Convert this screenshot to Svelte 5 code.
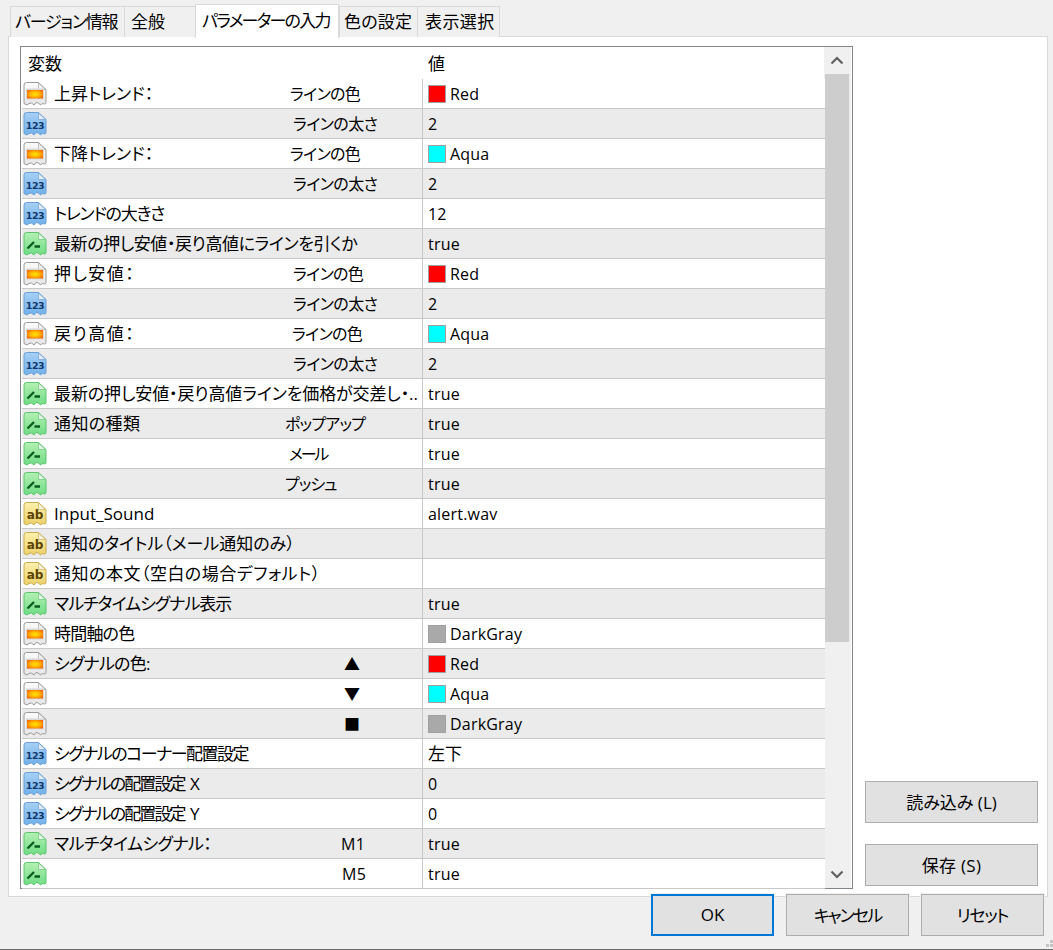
<script>
  const tabs = [
    { label: 'バージョン情報', w: 114, pad: 4, ls: -1.2 },
    { label: '全般', w: 71, pad: 6, ls: 0 },
    { label: 'パラメーターの入力', w: 144, pad: 6, ls: -1.8, active: true },
    { label: '色の設定', w: 78, pad: 4, ls: .2 },
    { label: '表示選択', w: 83, pad: 7, ls: .4 }
  ];
  const colors = { Red: '#ff0000', Aqua: '#00ffff', DarkGray: '#a9a9a9' };
  const isLatin = (s) => /^[A-Za-z0-9_]+$/.test(s);
  // kind, name, sub, sub offset, value, name tracking, sub tracking
  const rows = [
    ['c', '上昇トレンド：', 'ラインの色', 269, 'Red', 0, -.7],
    ['n', '', 'ラインの太さ', 272, '2', 0, -.6],
    ['c', '下降トレンド：', 'ラインの色', 269, 'Aqua', 0, -.7],
    ['n', '', 'ラインの太さ', 272, '2', 0, -.6],
    ['n', 'トレンドの大きさ', '', 0, '12', -1.25, 0],
    ['b', '最新の押し安値・戻り高値にラインを引くか', '', 0, 'true', -.4, 0],
    ['c', '押し安値：', 'ラインの色', 272, 'Red', 1.5, -.7],
    ['n', '', 'ラインの太さ', 272, '2', 0, -.6],
    ['c', '戻り高値：', 'ラインの色', 271, 'Aqua', 1.5, -.7],
    ['n', '', 'ラインの太さ', 272, '2', 0, -.6],
    ['b', '最新の押し安値・戻り高値ラインを価格が交差し・..', '', 0, 'true', -.1, 0],
    ['b', '通知の種類', 'ポップアップ', 264, 'true', .4, -.8],
    ['b', '', 'メール', 268, 'true', 0, -2.2],
    ['b', '', 'プッシュ', 264, 'true', 0, -1],
    ['s', 'Input_Sound', '', 0, 'alert.wav', 0, 0],
    ['s', '通知のタイトル（メール通知のみ）', '', 0, '', 0, 0],
    ['s', '通知の本文（空白の場合デフォルト）', '', 0, '', .5, 0],
    ['b', 'マルチタイムシグナル表示', '', 0, 'true', -1, 0],
    ['c', '時間軸の色', '', 0, 'DarkGray', -.8, 0],
    ['c', 'シグナルの色:', '▲', 323, 'Red', -.8, 0],
    ['c', '', '▼', 323, 'Aqua', 0, 0],
    ['c', '', '■', 323, 'DarkGray', 0, 0],
    ['n', 'シグナルのコーナー配置設定', '', 0, '左下', -1.5, 0],
    ['n', 'シグナルの配置設定 X', '', 0, '0', -1.9, 0],
    ['n', 'シグナルの配置設定 Y', '', 0, '0', -1.9, 0],
    ['b', 'マルチタイムシグナル：', 'M1', 320, 'true', -.6, .3],
    ['b', '', 'M5', 321, 'true', 0, .3]
  ];
  const docPath = 'M3.5 .5H15.5L23 7.5V20.5Q23 22 21.5 22L19.5 21.5 17.5 23 15.5 21 13 20.5 11 23 8.5 21 6 21.5 4 23 1 21.5V3Q1 .5 3.5 .5Z';
  const palette = {
    c: { fill: 'url(#gc)', line: '#9a9a9a' },
    n: { fill: 'url(#gn)', line: '#6b9fd6' },
    b: { fill: 'url(#gb)', line: '#5cc46e' },
    s: { fill: 'url(#gs)', line: '#c9ad4e' }
  };
</script>

{#snippet icon(kind)}
  <svg class="icon" viewBox="0 0 24 24" width="24" height="24" aria-hidden="true">
    <path d={docPath} fill={palette[kind].fill} stroke={palette[kind].line} />
    <path d="M15.5 1V7.5H22.5Z" fill="#f4f4f4" stroke={palette[kind].line} stroke-width=".7" opacity=".85" />
    {#if kind === 'c'}
      <rect x="3" y="6.5" width="18" height="11" fill="#d8d8d8" />
      <rect x="4" y="8" width="16" height="8.5" fill="url(#gfire)" />
    {:else if kind === 'n'}
      <text class="glyph num" x="12" y="17" text-anchor="middle">123</text>
    {:else if kind === 'b'}
      <path d="M4.5 16.5L11 10M11.5 14.5H17" stroke="#0b5d1e" stroke-width="2.4" fill="none" />
    {:else}
      <text class="glyph ab" x="12" y="17" text-anchor="middle">ab</text>
    {/if}
  </svg>
{/snippet}

<div class="window">
  <svg class="defs" width="0" height="0" aria-hidden="true">
    <defs>
      <linearGradient id="gc" x1="0" y1="0" x2="0" y2="1"><stop offset="0" stop-color="#fbfbfb" /><stop offset="1" stop-color="#e6e6e6" /></linearGradient>
      <linearGradient id="gn" x1="0" y1="0" x2="0" y2="1"><stop offset="0" stop-color="#a7d0f5" /><stop offset="1" stop-color="#6fb0ea" /></linearGradient>
      <linearGradient id="gb" x1="0" y1="0" x2="0" y2="1"><stop offset="0" stop-color="#b4f0b4" /><stop offset="1" stop-color="#6fdc84" /></linearGradient>
      <linearGradient id="gs" x1="0" y1="0" x2="0" y2="1"><stop offset="0" stop-color="#fdf0ae" /><stop offset="1" stop-color="#ecd06a" /></linearGradient>
      <radialGradient id="gfire" cx=".5" cy=".5" r=".6"><stop offset="0" stop-color="#ffe600" /><stop offset=".55" stop-color="#ffb000" /><stop offset="1" stop-color="#f76a00" /></radialGradient>
    </defs>
  </svg>

  <div class="tabs">
    {#each tabs as t}
      <div class="tab" class:active={t.active} style:width="{t.w}px" style:padding-left="{t.pad}px" style:letter-spacing="{t.ls}px">{t.label}</div>
    {/each}
  </div>

  <div class="panel">
    <div class="list">
      <div class="content">
        <div class="head">
          <div class="hname">変数</div>
          <div class="hval">値</div>
        </div>
        {#each rows as r, i}
          <div class="row" class:alt={i % 2 === 1}>
            <div class="cell-name">
              {@render icon(r[0])}
              <span class="name" class:latin={isLatin(r[1])} style:letter-spacing="{r[5]}px">{r[1]}</span>
              {#if r[2]}<span class="sub" class:latin={isLatin(r[2])} style:padding-left="{r[3]}px" style:letter-spacing="{r[6]}px">{r[2]}</span>{/if}
            </div>
            <div class="cell-val" class:kanji={r[4] === '左下'}>
              {#if colors[r[4]]}<span class="swatch" style:background={colors[r[4]]}></span>{/if}
              <span>{r[4]}</span>
            </div>
          </div>
        {/each}
      </div>
      <div class="scroll">
        <div class="arrow">
          <svg width="14" height="9" viewBox="0 0 14 9"><path d="M1.5 7.5L7 2L12.5 7.5" fill="none" stroke="#606060" stroke-width="2.2" /></svg>
        </div>
        <div class="thumb"></div>
        <div class="track"></div>
        <div class="arrow">
          <svg width="14" height="9" viewBox="0 0 14 9"><path d="M1.5 1.5L7 7L12.5 1.5" fill="none" stroke="#606060" stroke-width="2.2" /></svg>
        </div>
      </div>
    </div>
    <div class="side">
      <button class="btn side-btn">読み込み (L)</button>
      <button class="btn side-btn save">保存 (S)</button>
    </div>
  </div>

  <div class="footer">
    <button class="btn foot-btn primary">OK</button>
    <button class="btn foot-btn cancel">キャンセル</button>
    <button class="btn foot-btn reset">リセット</button>
  </div>
  <div class="grip"></div>
  <div class="edge"></div>
</div>

<style>
  :global(body) {
    margin: 0;
    background: #f0f0f0;
  }
  .window {
    position: relative;
    width: 1053px;
    height: 950px;
    overflow: hidden;
    background: #f0f0f0;
    color: #000;
    font-family: "Open Sans", "Noto Sans CJK JP", sans-serif;
    font-size: 17px;
    font-feature-settings: "palt";
    display: flex;
    flex-direction: column;
  }
  .defs {
    position: absolute;
  }
  .tabs {
    display: flex;
    align-items: flex-end;
    height: 37px;
    padding-left: 10px;
    position: relative;
    z-index: 1;
  }
  .tab {
    box-sizing: border-box;
    height: 31px;
    border: 1px solid #d9d9d9;
    border-bottom: 0;
    border-right-width: 0;
    background: #f0f0f0;
    display: flex;
    align-items: center;
    white-space: nowrap;
    line-height: 1;
    padding-bottom: 1px;
  }
  .tab:last-child {
    border-right-width: 1px;
  }
  .tab.active {
    height: 34px;
    background: #fff;
    border-right-width: 1px;
    margin-bottom: -1px;
    padding-bottom: 3px;
  }
  .panel {
    box-sizing: border-box;
    margin: -1px 5px 0 8px;
    height: 861px;
    background: #fff;
    border: 1px solid #d9d9d9;
    display: flex;
    padding: 9px 0 7px 11px;
  }
  .list {
    box-sizing: border-box;
    width: 833px;
    height: 843px;
    border: 1px solid #82878c;
    display: flex;
    background: #fff;
  }
  .content {
    width: 804px;
  }
  .head {
    height: 32px;
    display: flex;
    align-items: center;
    border-right: 1px solid #f0f0f0;
    padding-bottom: 2px;
    box-sizing: border-box;
  }
  .hname {
    width: 401px;
    padding-left: 7px;
    box-sizing: border-box;
  }
  .hval {
    padding-left: 6px;
  }
  .row {
    box-sizing: border-box;
    height: 30px;
    display: flex;
    border-bottom: 1px solid #c8c8c8;
    margin-left: 1px;
  }
  .row.alt {
    background: #ebebeb;
  }
  .cell-name {
    box-sizing: border-box;
    width: 401px;
    border-right: 1px solid #c8c8c8;
    display: grid;
    grid-template-columns: 31px 1fr;
    align-items: center;
    padding-left: 1px;
    white-space: nowrap;
    position: relative;
  }
  .icon {
    grid-column: 1;
    grid-row: 1;
  }
  .glyph {
    font-family: "DejaVu Sans", sans-serif;
    font-weight: 700;
    fill: #12386b;
    font-feature-settings: normal;
  }
  .num {
    font-size: 9.5px;
    letter-spacing: -.5px;
  }
  .ab {
    font-size: 12px;
    fill: #5a4300;
  }
  .name {
    grid-column: 2;
    grid-row: 1;
    padding-bottom: 2px;
    word-spacing: 3px;
  }
  .name.latin {
    padding-bottom: 0;
  }
  .sub {
    grid-column: 2;
    grid-row: 1;
    margin-left: -33px;
    font-size: 16px;
    padding-bottom: 1px;
  }
  .sub.latin {
    padding-bottom: 0;
    padding-top: 1px;
  }
  .cell-val {
    flex: 1;
    display: flex;
    align-items: center;
    gap: 4px;
    padding-left: 5px;
    white-space: nowrap;
    font-size: 16px;
    letter-spacing: .2px;
  }
  .cell-val.kanji {
    font-size: 17px;
    letter-spacing: 0;
    padding-bottom: 2px;
  }
  .swatch {
    box-sizing: border-box;
    width: 18px;
    height: 18px;
    border: 1px solid #a0a0a0;
  }
  .scroll {
    width: 26px;
    background: #f0f0f0;
    display: flex;
    flex-direction: column;
  }
  .arrow {
    height: 27px;
    flex: none;
    display: flex;
    align-items: center;
    justify-content: center;
    padding-right: 2px;
  }
  .thumb {
    height: 568px;
    width: 24px;
    background: #cdcdcd;
  }
  .track {
    flex: 1;
  }
  .side {
    flex: 1;
    display: flex;
    flex-direction: column;
    align-items: flex-start;
    justify-content: flex-end;
    gap: 21px;
    padding: 0 0 3px 12px;
  }
  .btn {
    box-sizing: border-box;
    height: 42px;
    border: 1px solid #adadad;
    background: #e1e1e1;
    font: inherit;
    color: #000;
    padding: 0 0 2px;
  }
  .side-btn {
    width: 173px;
  }
  .save {
    letter-spacing: .3px;
  }
  .footer {
    display: flex;
    gap: 12px;
    margin-top: -3px;
    padding-left: 651px;
    position: relative;
  }
  .foot-btn {
    width: 123px;
    box-shadow: 0 0 0 1px #f0f0f0;
  }
  .primary {
    border: 2px solid #0078d7;
  }
  .cancel {
    letter-spacing: -1.9px;
  }
  .reset {
    letter-spacing: -1.3px;
  }
  .grip {
    position: absolute;
    right: 0;
    bottom: 3px;
    width: 7px;
    height: 7px;
    background:
      linear-gradient(#c4c4c4, #c4c4c4) 0 4px / 3px 3px no-repeat,
      linear-gradient(#c4c4c4, #c4c4c4) 4px 4px / 3px 3px no-repeat,
      linear-gradient(#c4c4c4, #c4c4c4) 4px 0 / 3px 3px no-repeat;
  }
  .edge {
    position: absolute;
    left: 0;
    right: 0;
    bottom: 0;
    height: 1px;
    background: #6a6a6a;
  }
</style>
